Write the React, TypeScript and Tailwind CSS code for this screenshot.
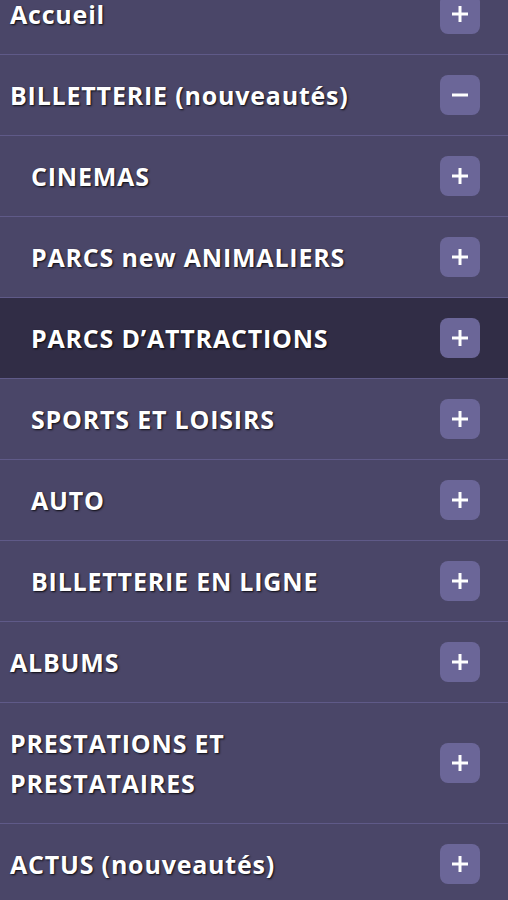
import React from "react";

type Item = { label: React.ReactNode; sub?: boolean; open?: boolean; active?: boolean };

const items: Item[] = [
  { label: "Accueil" },
  { label: "BILLETTERIE (nouveautés)", open: true },
  { label: "CINEMAS", sub: true },
  { label: "PARCS new ANIMALIERS", sub: true },
  { label: "PARCS D’ATTRACTIONS", sub: true, active: true },
  { label: "SPORTS ET LOISIRS", sub: true },
  { label: "AUTO", sub: true },
  { label: "BILLETTERIE EN LIGNE", sub: true },
  { label: "ALBUMS" },
  { label: <>PRESTATIONS ET<br />PRESTATAIRES</> },
  { label: "ACTUS (nouveautés)" },
];

function Toggle({ open }: { open?: boolean }) {
  return (
    <div className="w-10 h-10 shrink-0 rounded-lg bg-[#6b6698] flex items-center justify-center">
      <svg width="18" height="18" viewBox="0 0 18 18">
        <path d="M1 9h16" stroke="white" strokeWidth="3" />
        {!open && <path d="M9 1v16" stroke="white" strokeWidth="3" />}
      </svg>
    </div>
  );
}

export default function App() {
  return (
    <div
      className="w-[508px] h-[900px] overflow-hidden bg-[#4a4668]"
      style={{ fontFamily: "'Open Sans', sans-serif" }}
    >
      <div className="-mt-[26px]">
        {items.map((it, i) => (
          <div
            key={i}
            className={`flex items-center justify-between py-5 pr-7 border-b border-[#5f5a88] ${
              it.sub ? "pl-[31px]" : "pl-[10px]"
            } ${it.active ? "bg-[#312d46]" : ""}`}
          >
            <div className="text-white font-[750] text-[25px] tracking-[0.8px] leading-[40px] [text-shadow:1px_1px_2px_rgba(0,0,0,0.85)]">
              {it.label}
            </div>
            <Toggle open={it.open} />
          </div>
        ))}
      </div>
    </div>
  );
}
